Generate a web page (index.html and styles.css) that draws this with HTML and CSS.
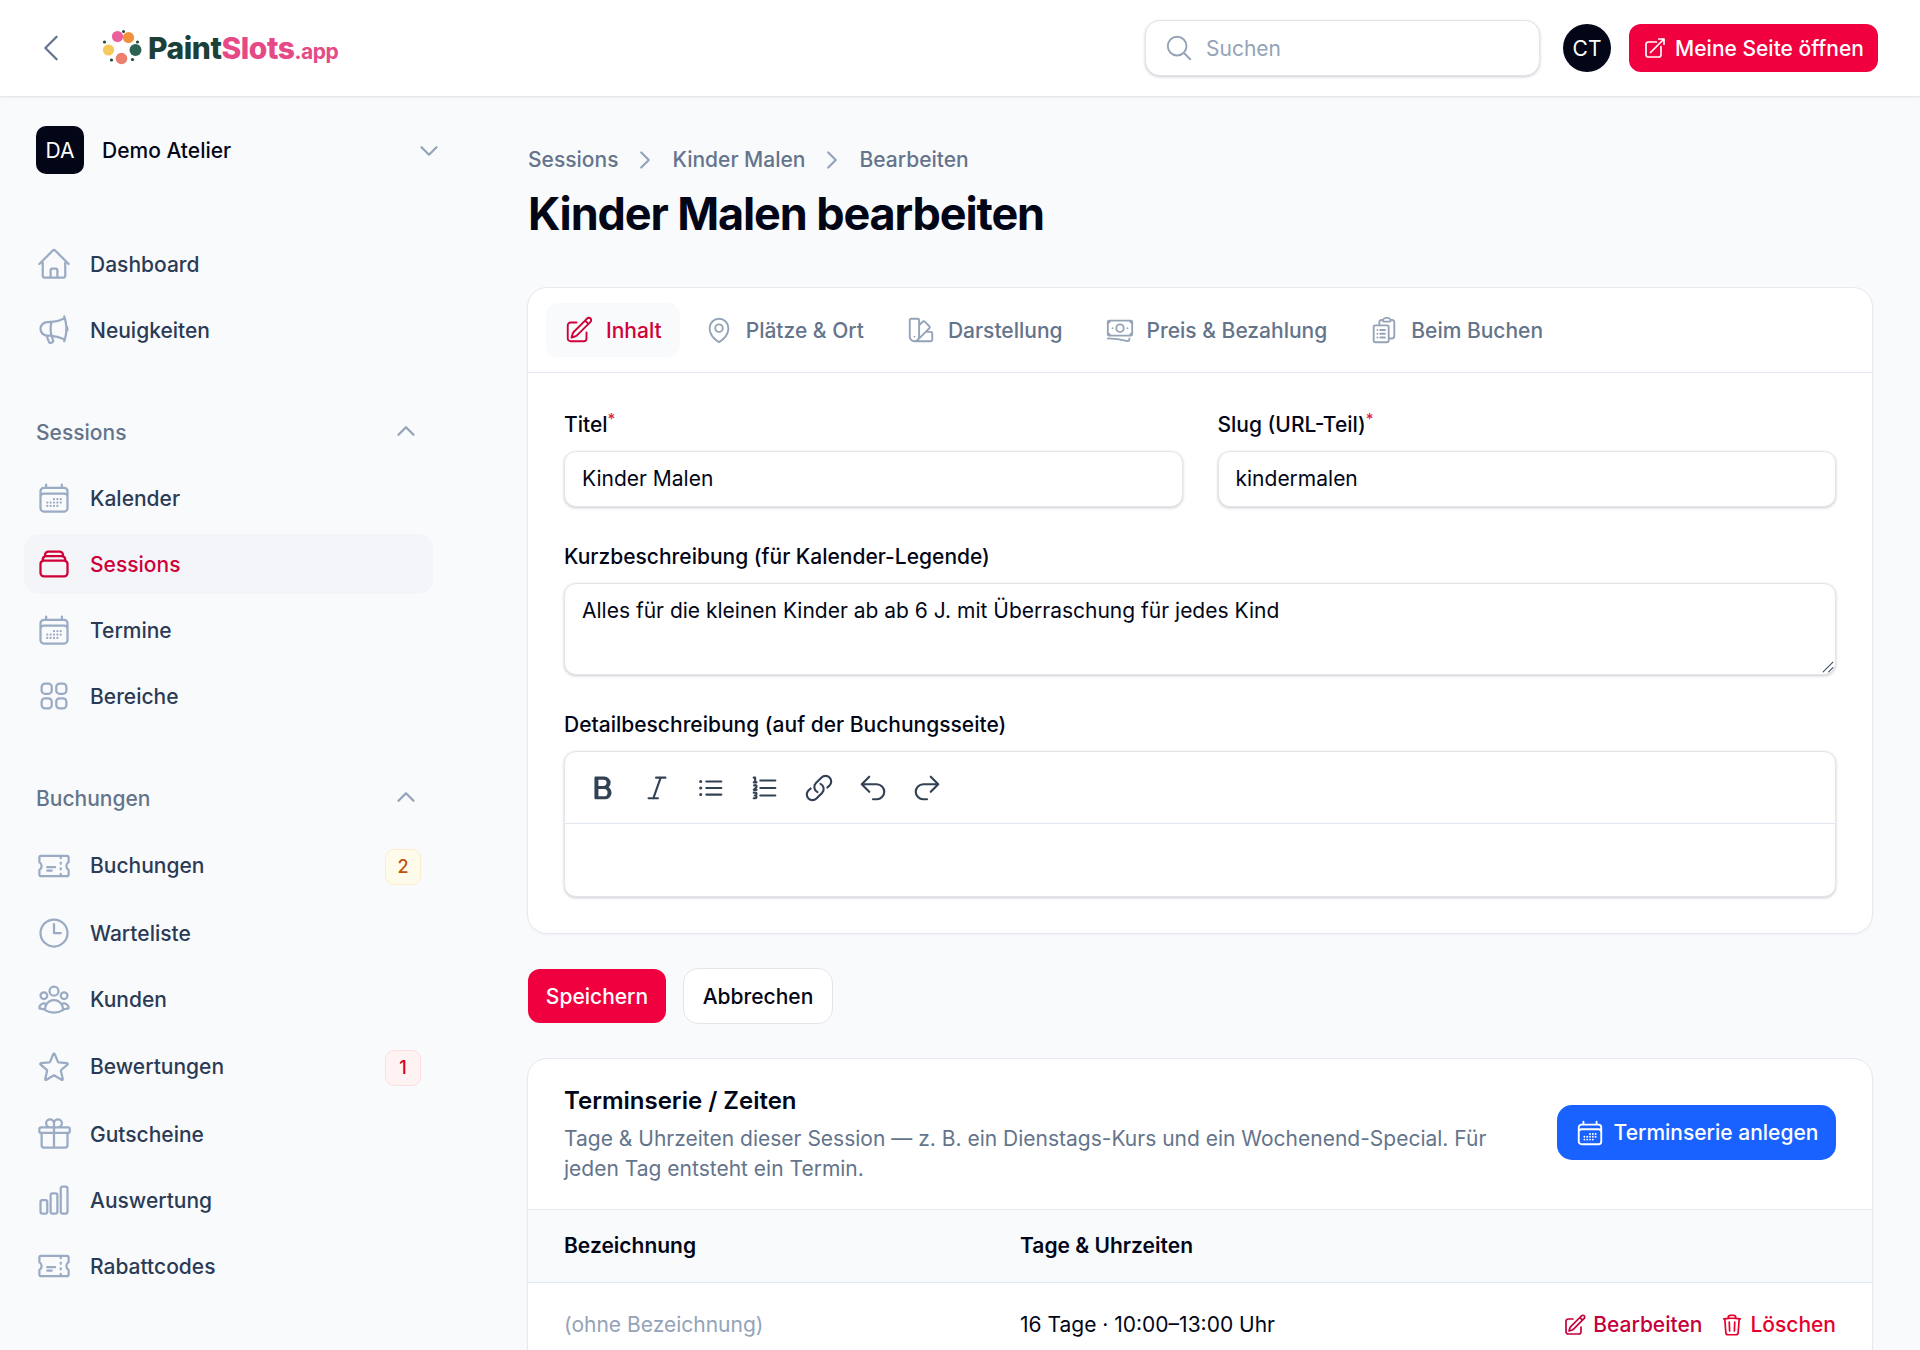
FILE: index.html
```html
<!DOCTYPE html>
<html lang="de">
<head>
<meta charset="utf-8">
<title>Kinder Malen bearbeiten</title>
<link rel="stylesheet" href="styles.css">
</head>
<body>
<svg class="sprite" xmlns="http://www.w3.org/2000/svg">
  <symbol id="i-home" viewBox="0 0 24 24"><path d="m2.25 12 8.954-8.955c.44-.439 1.152-.439 1.591 0L21.75 12M4.5 9.75v10.125c0 .621.504 1.125 1.125 1.125H9.75v-4.875c0-.621.504-1.125 1.125-1.125h2.25c.621 0 1.125.504 1.125 1.125V21h4.125c.621 0 1.125-.504 1.125-1.125V9.75M8.25 21h8.25"/></symbol>
  <symbol id="i-mega" viewBox="0 0 24 24"><path d="M10.34 15.84c-.688-.06-1.386-.09-2.09-.09H7.5a4.5 4.5 0 1 1 0-9h.75c.704 0 1.402-.03 2.09-.09m0 9.18c.253.962.584 1.892.985 2.783.247.55.06 1.21-.463 1.511l-.657.38c-.551.318-1.26.117-1.527-.461a20.845 20.845 0 0 1-1.44-4.282m3.102.069a18.03 18.03 0 0 1-.59-4.59c0-1.586.205-3.124.59-4.59m0 9.18a23.848 23.848 0 0 1 8.835 2.535M10.34 6.66a23.847 23.847 0 0 0 8.835-2.535m0 0A23.74 23.74 0 0 0 18.795 3m.38 1.125a23.91 23.91 0 0 1 1.014 5.395m-1.014 8.855c-.118.38-.245.754-.38 1.125m.38-1.125a23.91 23.91 0 0 0 1.014-5.395m0-3.46c.495.413.811 1.035.811 1.73 0 .695-.316 1.317-.811 1.73m0-3.46a24.347 24.347 0 0 1 0 3.46"/></symbol>
  <symbol id="i-cal" viewBox="0 0 24 24"><path d="M6.75 3v2.25M17.25 3v2.25M3 18.75V7.5a2.25 2.25 0 0 1 2.25-2.25h13.5A2.25 2.25 0 0 1 21 7.5v11.25m-18 0A2.25 2.25 0 0 0 5.25 21h13.5A2.25 2.25 0 0 0 21 18.75m-18 0v-7.5A2.25 2.25 0 0 1 5.25 9h13.5A2.25 2.25 0 0 1 21 11.25v7.5m-9-6h.008v.008H12v-.008ZM12 15h.008v.008H12V15Zm0 2.25h.008v.008H12v-.008ZM9.75 15h.008v.008H9.75V15Zm0 2.25h.008v.008H9.75v-.008ZM7.5 15h.008v.008H7.5V15Zm0 2.25h.008v.008H7.5v-.008Zm6.75-4.5h.008v.008h-.008v-.008Zm0 2.25h.008v.008h-.008V15Zm0 2.25h.008v.008h-.008v-.008Zm2.25-4.5h.008v.008H16.5v-.008Zm0 2.25h.008v.008H16.5V15Z"/></symbol>
  <symbol id="i-stack" viewBox="0 0 24 24"><path d="M6 6.878V6a2.25 2.25 0 0 1 2.25-2.25h7.5A2.25 2.25 0 0 1 18 6v.878m-12 0c.235-.083.487-.128.75-.128h10.5c.263 0 .515.045.75.128m-12 0A2.244 2.244 0 0 0 4.5 9v.878m13.5-3A2.244 2.244 0 0 1 19.5 9v.878m0 0a2.246 2.246 0 0 0-.75-.128H5.25c-.263 0-.515.045-.75.128m15 0A2.25 2.25 0 0 1 21 12v6a2.25 2.25 0 0 1-2.25 2.25H5.25A2.25 2.25 0 0 1 3 18v-6c0-.98.626-1.813 1.5-2.122"/></symbol>
  <symbol id="i-squares" viewBox="0 0 24 24"><path d="M3.75 6A2.25 2.25 0 0 1 6 3.75h2.25A2.25 2.25 0 0 1 10.5 6v2.25a2.25 2.25 0 0 1-2.25 2.25H6a2.25 2.25 0 0 1-2.25-2.25V6ZM3.75 15.75A2.25 2.25 0 0 1 6 13.5h2.25a2.25 2.25 0 0 1 2.25 2.25V18a2.25 2.25 0 0 1-2.25 2.25H6A2.25 2.25 0 0 1 3.75 18v-2.25ZM13.5 6a2.25 2.25 0 0 1 2.25-2.25H18A2.25 2.25 0 0 1 20.25 6v2.25A2.25 2.25 0 0 1 18 10.5h-2.25a2.25 2.25 0 0 1-2.25-2.25V6ZM13.5 15.75a2.25 2.25 0 0 1 2.25-2.25H18a2.25 2.25 0 0 1 2.25 2.25V18A2.25 2.25 0 0 1 18 20.25h-2.25A2.25 2.25 0 0 1 13.5 18v-2.25Z"/></symbol>
  <symbol id="i-ticket" viewBox="0 0 24 24"><path d="M16.5 6v.75m0 3v.75m0 3v.75m0 3V18m-9-5.25h5.25M7.5 15h3M3.375 5.25c-.621 0-1.125.504-1.125 1.125v3.026a2.999 2.999 0 0 1 0 5.198v3.026c0 .621.504 1.125 1.125 1.125h17.25c.621 0 1.125-.504 1.125-1.125v-3.026a2.999 2.999 0 0 1 0-5.198V6.375c0-.621-.504-1.125-1.125-1.125H3.375Z"/></symbol>
  <symbol id="i-clock" viewBox="0 0 24 24"><path d="M12 6v6h4.5m4.5 0a9 9 0 1 1-18 0 9 9 0 0 1 18 0Z"/></symbol>
  <symbol id="i-users" viewBox="0 0 24 24"><path d="M18 18.72a9.094 9.094 0 0 0 3.741-.479 3 3 0 0 0-4.682-2.72m.94 3.198.001.031c0 .225-.012.447-.037.666A11.944 11.944 0 0 1 12 21c-2.17 0-4.207-.576-5.963-1.584A6.062 6.062 0 0 1 6 18.719m12 0a5.971 5.971 0 0 0-.941-3.197m0 0A5.995 5.995 0 0 0 12 12.75a5.995 5.995 0 0 0-5.058 2.772m0 0a3 3 0 0 0-4.681 2.72 8.986 8.986 0 0 0 3.74.477m.94-3.197a5.971 5.971 0 0 0-.94 3.197M15 6.75a3 3 0 1 1-6 0 3 3 0 0 1 6 0Zm6 3a2.25 2.25 0 1 1-4.5 0 2.25 2.25 0 0 1 4.5 0Zm-13.5 0a2.25 2.25 0 1 1-4.5 0 2.25 2.25 0 0 1 4.5 0Z"/></symbol>
  <symbol id="i-star" viewBox="0 0 24 24"><path d="M11.48 3.499a.562.562 0 0 1 1.04 0l2.125 5.111a.563.563 0 0 0 .475.345l5.518.442c.499.04.701.663.321.988l-4.204 3.602a.563.563 0 0 0-.182.557l1.285 5.385a.562.562 0 0 1-.84.61l-4.725-2.885a.562.562 0 0 0-.586 0L6.982 20.54a.562.562 0 0 1-.84-.61l1.285-5.386a.562.562 0 0 0-.182-.557l-4.204-3.602a.562.562 0 0 1 .321-.988l5.518-.442a.563.563 0 0 0 .475-.345L11.48 3.5Z"/></symbol>
  <symbol id="i-gift" viewBox="0 0 24 24"><path d="M21 11.25v8.25a1.5 1.5 0 0 1-1.5 1.5H5.25a1.5 1.5 0 0 1-1.5-1.5v-8.25M12 4.875A2.625 2.625 0 1 0 9.375 7.5H12m0-2.625V7.5m0-2.625A2.625 2.625 0 1 1 14.625 7.5H12m0 0V21m-8.625-9.75h18c.621 0 1.125-.504 1.125-1.125v-1.5c0-.621-.504-1.125-1.125-1.125h-18c-.621 0-1.125.504-1.125 1.125v1.5c0 .621.504 1.125 1.125 1.125Z"/></symbol>
  <symbol id="i-chart" viewBox="0 0 24 24"><path d="M3 13.125C3 12.504 3.504 12 4.125 12h2.25c.621 0 1.125.504 1.125 1.125v6.75C7.5 20.496 6.996 21 6.375 21h-2.25A1.125 1.125 0 0 1 3 19.875v-6.75ZM9.75 8.625c0-.621.504-1.125 1.125-1.125h2.25c.621 0 1.125.504 1.125 1.125v11.25c0 .621-.504 1.125-1.125 1.125h-2.25a1.125 1.125 0 0 1-1.125-1.125V8.625ZM16.5 4.125c0-.621.504-1.125 1.125-1.125h2.25C20.496 3 21 3.504 21 4.125v15.75c0 .621-.504 1.125-1.125 1.125h-2.25a1.125 1.125 0 0 1-1.125-1.125V4.125Z"/></symbol>
  <symbol id="i-search" viewBox="0 0 24 24"><path d="m21 21-5.197-5.197m0 0A7.5 7.5 0 1 0 5.196 5.196a7.5 7.5 0 0 0 10.607 10.607Z"/></symbol>
  <symbol id="i-ext" viewBox="0 0 24 24"><path d="M13.5 6H5.25A2.25 2.25 0 0 0 3 8.25v10.5A2.25 2.25 0 0 0 5.25 21h10.5A2.25 2.25 0 0 0 18 18.75V10.5m-10.5 6L21 3m0 0h-5.25M21 3v5.25"/></symbol>
  <symbol id="i-pencil" viewBox="0 0 24 24"><path d="m16.862 4.487 1.687-1.688a1.875 1.875 0 1 1 2.652 2.652L10.582 16.07a4.5 4.5 0 0 1-1.897 1.13L6 18l.8-2.685a4.5 4.5 0 0 1 1.13-1.897l8.932-8.931Zm0 0L19.5 7.125M18 14v4.75A2.25 2.25 0 0 1 15.75 21H5.25A2.25 2.25 0 0 1 3 18.75V8.25A2.25 2.25 0 0 1 5.25 6H10"/></symbol>
  <symbol id="i-pin" viewBox="0 0 24 24"><path d="M15 10.5a3 3 0 1 1-6 0 3 3 0 0 1 6 0Z"/><path d="M19.5 10.5c0 7.142-7.5 11.25-7.5 11.25S4.5 17.642 4.5 10.5a7.5 7.5 0 1 1 15 0Z"/></symbol>
  <symbol id="i-swatch" viewBox="0 0 24 24"><path d="M4.098 19.902a3.75 3.75 0 0 0 5.304 0l6.401-6.402M6.75 21A3.75 3.75 0 0 1 3 17.25V4.125C3 3.504 3.504 3 4.125 3h5.25c.621 0 1.125.504 1.125 1.125v4.072M6.75 21a3.75 3.75 0 0 0 3.75-3.75V8.197M6.75 21h13.125c.621 0 1.125-.504 1.125-1.125v-5.25c0-.621-.504-1.125-1.125-1.125h-4.072M10.5 8.197l2.88-2.88c.438-.439 1.15-.439 1.59 0l3.712 3.713c.44.44.44 1.152 0 1.59l-2.879 2.88M6.75 17.25h.008v.008H6.75v-.008Z"/></symbol>
  <symbol id="i-bank" viewBox="0 0 24 24"><path d="M2.25 18.75a60.07 60.07 0 0 1 15.797 2.101c.727.198 1.453-.342 1.453-1.096V18.75M3.75 4.5v.75A.75.75 0 0 1 3 6h-.75m0 0v-.375c0-.621.504-1.125 1.125-1.125H20.25M2.25 6v9m18-10.5v.75c0 .414.336.75.75.75h.75m-1.5-1.5h.375c.621 0 1.125.504 1.125 1.125v9.75c0 .621-.504 1.125-1.125 1.125h-.375m1.5-1.5H21a.75.75 0 0 0-.75.75v.75m0 0H3.75m0 0h-.375a1.125 1.125 0 0 1-1.125-1.125V15m1.5 1.5v-.75A.75.75 0 0 0 3 15h-.75M15 10.5a3 3 0 1 1-6 0 3 3 0 0 1 6 0Zm3 0h.008v.008H18V10.5Zm-12 0h.008v.008H6V10.5Z"/></symbol>
  <symbol id="i-clip" viewBox="0 0 24 24"><path d="M9 12h3.75M9 15h3.75M9 18h3.75m3 .75H18a2.25 2.25 0 0 0 2.25-2.25V6.108c0-1.135-.845-2.098-1.976-2.192a48.424 48.424 0 0 0-1.123-.08m-5.801 0c-.065.21-.1.433-.1.664 0 .414.336.75.75.75h4.5a.75.75 0 0 0 .75-.75 2.25 2.25 0 0 0-.1-.664m-5.8 0A2.251 2.251 0 0 1 13.5 2.25H15c1.012 0 1.867.668 2.15 1.586m-5.8 0c-.376.023-.75.05-1.124.08C9.095 4.01 8.25 4.973 8.25 6.108V8.25m0 0H4.875c-.621 0-1.125.504-1.125 1.125v11.25c0 .621.504 1.125 1.125 1.125h9.75c.621 0 1.125-.504 1.125-1.125V9.375c0-.621-.504-1.125-1.125-1.125H8.25ZM6.75 12h.008v.008H6.75V12Zm0 3h.008v.008H6.75V15Zm0 3h.008v.008H6.75V18Z"/></symbol>
  <symbol id="i-trash" viewBox="0 0 24 24"><path d="m14.74 9-.346 9m-4.788 0L9.26 9m9.968-3.21c.342.052.682.107 1.022.166m-1.022-.165L18.16 19.673a2.25 2.25 0 0 1-2.244 2.077H8.084a2.25 2.25 0 0 1-2.244-2.077L4.772 5.79m14.456 0a48.108 48.108 0 0 0-3.478-.397m-12 .562c.34-.059.68-.114 1.022-.165m0 0a48.11 48.11 0 0 1 3.478-.397m7.5 0v-.916c0-1.18-.91-2.164-2.09-2.201a51.964 51.964 0 0 0-3.32 0c-1.18.037-2.09 1.022-2.09 2.201v.916m7.5 0a48.667 48.667 0 0 0-7.5 0"/></symbol>
  <symbol id="i-link" viewBox="0 0 24 24"><path d="M13.19 8.688a4.5 4.5 0 0 1 1.242 7.244l-4.5 4.5a4.5 4.5 0 0 1-6.364-6.364l1.757-1.757m13.35-.622 1.757-1.757a4.5 4.5 0 0 0-6.364-6.364l-4.5 4.5a4.5 4.5 0 0 0 1.242 7.244"/></symbol>
  <symbol id="i-undo" viewBox="0 0 24 24"><path d="M9 15 3 9m0 0 6-6M3 9h12a6 6 0 0 1 0 12h-3"/></symbol>
  <symbol id="i-redo" viewBox="0 0 24 24"><path d="m15 15 6-6m0 0-6-6m6 6H9a6 6 0 0 0 0 12h3"/></symbol>
  <symbol id="i-list" viewBox="0 0 24 24"><path d="M8.25 6.75h12M8.25 12h12m-12 5.25h12M3.75 6.75h.007v.008H3.75V6.75Zm.375 0a.375.375 0 1 1-.75 0 .375.375 0 0 1 .75 0ZM3.75 12h.007v.008H3.75V12Zm.375 0a.375.375 0 1 1-.75 0 .375.375 0 0 1 .75 0Zm-.375 5.25h.007v.008H3.75v-.008Zm.375 0a.375.375 0 1 1-.75 0 .375.375 0 0 1 .75 0Z"/></symbol>
  <symbol id="i-num" viewBox="0 0 24 24"><path d="M8.242 5.992h12m-12 6.003H20.24m-12 5.999h12M4.117 7.495v-3.75H2.99m1.125 3.75H2.99m1.125 0H5.24m-1.92 2.577a1.125 1.125 0 1 1 1.591 1.59l-1.83 1.83h2.16M2.99 15.745h1.125a1.125 1.125 0 0 1 0 2.25H3.74m0-.002h.375a1.125 1.125 0 0 1 0 2.25H2.99"/></symbol>
  <symbol id="i-bold" viewBox="0 0 24 24"><path d="M6.75 3.744h-.753v8.25h7.125a4.125 4.125 0 0 0 0-8.25H6.75Zm0 0v.38m0 16.122h6.747a4.5 4.5 0 0 0 0-9.001h-7.5v9h.753Zm0 0v-.37m0-15.751h6a3.75 3.75 0 1 1 0 7.5h-6m0-7.5v7.5m0 0v8.25m0-8.25h6.375a4.125 4.125 0 0 1 0 8.25H6.75m.747-15.38h4.875a3.375 3.375 0 0 1 0 6.75H7.497v-6.75Zm0 7.5h5.25a3.75 3.75 0 0 1 0 7.5h-5.25v-7.5Z"/></symbol>
  <symbol id="i-italic" viewBox="0 0 24 24"><path d="M5.248 20.246H9.05m0 0h3.696m-3.696 0 5.893-16.502m0 0h-3.697m3.697 0h3.803"/></symbol>
  <symbol id="i-left" viewBox="0 0 24 24"><path d="M15.75 19.5 8.25 12l7.5-7.5"/></symbol>
  <symbol id="i-right" viewBox="0 0 20 20"><path d="M7.5 5l5 5-5 5"/></symbol>
  <symbol id="i-down" viewBox="0 0 20 20"><path d="M5 7.5l5 5 5-5"/></symbol>
  <symbol id="i-up" viewBox="0 0 20 20"><path d="M5 12.5l5-5 5 5"/></symbol>
</svg>

<header class="topbar">
  <button class="back" type="button" aria-label="Zurück"><svg class="ic-back"><use href="#i-left"/></svg></button>
  <a class="logo" href="#">
    <svg class="logo-mark" viewBox="0 0 40 36" xmlns="http://www.w3.org/2000/svg">
      <circle cx="2.5" cy="12" r="1.6" fill="#1f4a3f"/>
      <circle cx="21.5" cy="1.5" r="1.5" fill="#1f4a3f"/>
      <circle cx="35.5" cy="12" r="1.6" fill="#1f4a3f"/>
      <circle cx="9.5" cy="30" r="1.6" fill="#1f4a3f"/>
      <circle cx="30.5" cy="29.5" r="1.6" fill="#1f4a3f"/>
      <circle cx="15.5" cy="6.5" r="5.6" fill="#ea5f9c"/>
      <circle cx="26.5" cy="7.5" r="5.6" fill="#f1913b"/>
      <circle cx="6.5" cy="20" r="5.6" fill="#f5c95c"/>
      <circle cx="33.5" cy="20" r="6" fill="#2c6355"/>
      <circle cx="19.5" cy="28.5" r="5.8" fill="#ec7f6e"/>
    </svg>
    <span class="logo-text"><span class="logo-dark">Paint</span><span class="logo-pink">Slots</span><span class="logo-app">.app</span></span>
  </a>
  <div class="topbar-right">
    <label class="search"><svg class="ic"><use href="#i-search"/></svg><span>Suchen</span></label>
    <span class="avatar">CT</span>
    <a class="btn btn-primary btn-open" href="#"><svg class="ic ic-s"><use href="#i-ext"/></svg>Meine Seite öffnen</a>
  </div>
</header>

<div class="shell">
  <aside class="sidebar">
    <div class="team">
      <span class="team-badge">DA</span>
      <span class="team-name">Demo Atelier</span>
      <svg class="chev chev-team"><use href="#i-down"/></svg>
    </div>

    <nav class="nav-group nav-first">
      <a class="nav-item"><svg class="ic"><use href="#i-home"/></svg>Dashboard</a>
      <a class="nav-item"><svg class="ic"><use href="#i-mega"/></svg>Neuigkeiten</a>
    </nav>

    <div class="nav-head">Sessions<svg class="chev"><use href="#i-up"/></svg></div>
    <nav class="nav-group">
      <a class="nav-item"><svg class="ic"><use href="#i-cal"/></svg>Kalender</a>
      <a class="nav-item active"><svg class="ic"><use href="#i-stack"/></svg>Sessions</a>
      <a class="nav-item"><svg class="ic"><use href="#i-cal"/></svg>Termine</a>
      <a class="nav-item"><svg class="ic"><use href="#i-squares"/></svg>Bereiche</a>
    </nav>

    <div class="nav-head">Buchungen<svg class="chev"><use href="#i-up"/></svg></div>
    <nav class="nav-group">
      <a class="nav-item has-badge"><svg class="ic"><use href="#i-ticket"/></svg>Buchungen<span class="badge badge-amber">2</span></a>
      <a class="nav-item"><svg class="ic"><use href="#i-clock"/></svg>Warteliste</a>
      <a class="nav-item"><svg class="ic"><use href="#i-users"/></svg>Kunden</a>
      <a class="nav-item has-badge"><svg class="ic"><use href="#i-star"/></svg>Bewertungen<span class="badge badge-red">1</span></a>
      <a class="nav-item"><svg class="ic"><use href="#i-gift"/></svg>Gutscheine</a>
      <a class="nav-item"><svg class="ic"><use href="#i-chart"/></svg>Auswertung</a>
      <a class="nav-item"><svg class="ic"><use href="#i-ticket"/></svg>Rabattcodes</a>
    </nav>
  </aside>

  <main class="main">
    <div class="crumbs">
      <span>Sessions</span><svg class="crumb-sep"><use href="#i-right"/></svg>
      <span>Kinder Malen</span><svg class="crumb-sep"><use href="#i-right"/></svg>
      <span>Bearbeiten</span>
    </div>
    <h1 class="title">Kinder Malen bearbeiten</h1>

    <section class="card">
      <div class="tabs">
        <a class="tab active"><svg class="ic ic-t"><use href="#i-pencil"/></svg>Inhalt</a>
        <a class="tab"><svg class="ic ic-t"><use href="#i-pin"/></svg>Plätze &amp; Ort</a>
        <a class="tab"><svg class="ic ic-t"><use href="#i-swatch"/></svg>Darstellung</a>
        <a class="tab"><svg class="ic ic-t"><use href="#i-bank"/></svg>Preis &amp; Bezahlung</a>
        <a class="tab"><svg class="ic ic-t"><use href="#i-clip"/></svg>Beim Buchen</a>
      </div>
      <div class="form">
        <div class="form-row">
          <div class="field">
            <div class="label">Titel<sup>*</sup></div>
            <div class="input">Kinder Malen</div>
          </div>
          <div class="field">
            <div class="label">Slug (URL-Teil)<sup>*</sup></div>
            <div class="input">kindermalen</div>
          </div>
        </div>
        <div class="field">
          <div class="label">Kurzbeschreibung (für Kalender-Legende)</div>
          <div class="input textarea">Alles für die kleinen Kinder ab ab 6 J. mit Überraschung für jedes Kind
            <svg class="grip" viewBox="0 0 12 12"><path d="M11 2 2 11M11 7l-4 4"/></svg>
          </div>
        </div>
        <div class="field">
          <div class="label">Detailbeschreibung (auf der Buchungsseite)</div>
          <div class="editor">
            <div class="toolbar">
              <svg class="tool"><use href="#i-bold"/></svg>
              <svg class="tool"><use href="#i-italic"/></svg>
              <svg class="tool"><use href="#i-list"/></svg>
              <svg class="tool"><use href="#i-num"/></svg>
              <svg class="tool"><use href="#i-link"/></svg>
              <svg class="tool"><use href="#i-undo"/></svg>
              <svg class="tool"><use href="#i-redo"/></svg>
            </div>
            <div class="editor-body"></div>
          </div>
        </div>
      </div>
    </section>

    <div class="actions">
      <a class="btn btn-primary btn-save">Speichern</a>
      <a class="btn btn-ghost">Abbrechen</a>
    </div>

    <section class="card card-series">
      <div class="series-head">
        <div class="series-text">
          <h2>Terminserie / Zeiten</h2>
          <p>Tage &amp; Uhrzeiten dieser Session — z. B. ein Dienstags-Kurs und ein Wochenend-Special. Für jeden Tag entsteht ein Termin.</p>
        </div>
        <a class="btn btn-blue"><svg class="ic"><use href="#i-cal"/></svg>Terminserie anlegen</a>
      </div>
      <div class="t-row t-head">
        <span class="col-a">Bezeichnung</span>
        <span class="col-b">Tage &amp; Uhrzeiten</span>
      </div>
      <div class="t-row t-body">
        <span class="col-a muted">(ohne Bezeichnung)</span>
        <span class="col-b">16 Tage · 10:00–13:00 Uhr</span>
        <span class="col-c">
          <a class="link link-edit"><svg class="ic ic-l"><use href="#i-pencil"/></svg>Bearbeiten</a>
          <a class="link link-del"><svg class="ic ic-l"><use href="#i-trash"/></svg>Löschen</a>
        </span>
      </div>
    </section>
  </main>
</div>
</body>
</html>
```

FILE: styles.css
```css
* { box-sizing: border-box; }
html, body { margin: 0; height: 100vh; overflow: hidden; }
body {
  font-family: Inter, "Liberation Sans", sans-serif;
  font-size: 21px;
  line-height: 30px;
  color: #020617;
  background: #f9fafc;
}
a { color: inherit; text-decoration: none; }
.sprite { display: none; }

.ic, .chev, .crumb-sep, .tool, .ic-back, .grip {
  fill: none;
  stroke: currentColor;
  stroke-linecap: round;
  stroke-linejoin: round;
}
.ic { width: 36px; height: 36px; stroke-width: 1.5; flex: none; }

/* top bar */
.topbar {
  height: 97px;
  background: #fff;
  border-bottom: 1px solid #e5e7eb;
  box-shadow: 0 1px 2px rgba(15, 23, 42, .05);
  display: flex;
  align-items: center;
  padding: 0 42px 0 33px;
  position: relative;
}
.back { width: 36px; height: 36px; padding: 0; border: 0; background: none; color: #64748b; margin-right: 33px; }
.ic-back { width: 36px; height: 36px; stroke-width: 1.5; display: block; }
.logo { display: flex; align-items: center; }
.logo-mark { width: 40px; height: 36px; flex: none; margin-right: 6px; }
.logo-text { font-weight: 800; font-size: 30px; letter-spacing: -.45px; line-height: 36px; white-space: nowrap; position: relative; top: 2px; }
.logo-dark { color: #1b4038; }
.logo-pink { color: #e54a87; }
.logo-app { color: #e54a87; font-size: 21px; font-weight: 700; }
.topbar-right { margin-left: auto; display: flex; align-items: center; }
.search {
  width: 395px; height: 56px; background: #fff; border-radius: 15px;
  border: 1px solid #e2e5ea; box-shadow: 0 1px 3px rgba(15, 23, 42, .22);
  display: flex; align-items: center; gap: 12px; padding: 0 18px; color: #94a3b8;
  margin-right: 23px;
}
.search span { padding-top: 2px; }
.search .ic { width: 30px; height: 30px; stroke-width: 1.5; }
.avatar {
  width: 48px; height: 48px; border-radius: 50%; background: #020617; color: #fff; padding-top: 2px;
  display: flex; align-items: center; justify-content: center; font-size: 21px; margin-right: 18px;
}
.btn {
  display: inline-flex; align-items: center; justify-content: center; font-weight: 500;
  border-radius: 12px; white-space: nowrap;
}
.btn-primary { background: #f0003f; color: #fff; }
.btn-open { height: 48px; width: 249px; gap: 8px; padding-top: 2px; }
.btn-open .ic-s { width: 24px; height: 24px; stroke-width: 1.7; margin-top: -2px; }

/* layout */
.shell { display: flex; align-items: flex-start; }
.sidebar { width: 480px; flex: none; padding: 29px 47px 0 24px; }
.main { flex: 1; min-width: 0; padding: 48px 47px 0 48px; }

/* sidebar */
.team { display: flex; align-items: center; padding: 0 0 0 12px; height: 48px; margin-right: -4px; }
.team-badge {
  width: 48px; height: 48px; border-radius: 10px; background: #020617; color: #fff; padding-top: 2px;
  display: flex; align-items: center; justify-content: center; font-size: 21px; margin-right: 18px;
}
.team-name { font-weight: 500; color: #020617; padding-top: 2px; }
.chev { width: 30px; height: 30px; color: #94a3b8; stroke-width: 1.5; margin-left: auto; margin-top: -4px; flex: none; }
.chev-team { margin-right: -7px; margin-top: 2px; }
.nav-first { margin-top: 60px; }
.nav-group { display: flex; flex-direction: column; gap: 6px; }
.nav-item {
  height: 60px; display: flex; align-items: center; gap: 18px; padding: 2px 12px 0;
  color: #2b3a55; font-weight: 500; border-radius: 15px;
}
.nav-item .ic { color: #9aabc4; margin-top: -2px; }
.nav-item.has-badge { height: 63px; padding-top: 0; }
.nav-item.has-badge .ic { margin-top: 0; }
.nav-item.active { background: #f3f5f9; color: #cf0038; }
.nav-item.active .ic { color: #cf0038; }
.badge {
  margin-left: auto; margin-top: 3px; width: 36px; height: 36px; border-radius: 9px;
  display: flex; align-items: center; justify-content: center; font-size: 18px; line-height: 1; border: 1px solid;
}
.badge-amber { background: #fffbeb; color: #c2510c; border-color: #fdeecb; }
.badge-red { background: #fef2f2; color: #d00020; border-color: #fddde0; }
.nav-head {
  display: flex; align-items: center; height: 30px; margin: 58px 0 20px; padding: 0 12px;
  color: #64748b; font-weight: 500;
}

/* main */
.crumbs { display: flex; align-items: center; gap: 12px; color: #64748b; font-weight: 500; height: 30px; }
.crumb-sep { width: 30px; height: 30px; color: #94a3b8; stroke-width: 1.5; flex: none; }
.title { margin: 11px 0 45px; font-size: 45px; line-height: 56px; font-weight: 700; letter-spacing: -1.12px; color: #020617; }
.card {
  background: #fff; border: 1px solid #e6e9ef; border-radius: 20px; margin-left: -1px;
  box-shadow: 0 1px 2px rgba(15, 23, 42, .04);
}
.tabs { display: flex; gap: 6px; padding: 15px 18px; height: 85px; border-bottom: 1px solid #e2e8f0; }
.tab {
  display: flex; align-items: center; gap: 12px; padding: 2px 18px 0; height: 54px; border-radius: 12px;
  color: #64748b; font-weight: 500; white-space: nowrap;
}
.tab .ic { color: #94a3b8; margin-top: -2px; }
.ic-t { width: 30px; height: 30px; }
.tab.active { background: #f8fafc; color: #cf0038; }
.tab.active .ic { color: #cf0038; }
.form { padding: 36px; display: flex; flex-direction: column; gap: 34px; }
.form-row { display: grid; grid-template-columns: 1fr 1fr; gap: 35px; }
.label { font-weight: 500; padding-top: 1px; margin-bottom: 11px; color: #020617; height: 31px; }
.label sup { color: #e11d48; font-size: 15px; line-height: 0; font-weight: 500; }
.input {
  height: 56px; background: #fff; border-radius: 12px; border: 1px solid #e2e5ea;
  box-shadow: 0 1px 3px rgba(15, 23, 42, .22); padding: 12px 17px; color: #020617; position: relative;
}
.textarea { height: 92px; }
.grip { position: absolute; right: 1px; bottom: 1px; width: 13px; height: 13px; color: #475569; stroke-width: 1.1; }
.editor {
  height: 146px; border-radius: 12px; border: 1px solid #e2e5ea;
  box-shadow: 0 1px 3px rgba(15, 23, 42, .22); background: #fff;
}
.toolbar { height: 72px; border-bottom: 1px solid #e2e8f0; display: flex; align-items: center; gap: 24px; padding: 0 23px; color: #334155; }
.tool { width: 30px; height: 30px; stroke-width: 1.7; }

.actions { display: flex; align-items: center; gap: 17px; margin: 34px 0; }
.btn-save { width: 138px; height: 54px; padding-top: 2px; }
.btn-ghost { width: 150px; height: 56px; background: #fff; border: 1px solid #e2e5ea; border-radius: 15px; color: #020617; padding-top: 2px; }

.series-head { display: flex; align-items: flex-start; justify-content: space-between; padding: 24px 36px 0; height: 150px; }
.series-text { width: 950px; }
.series-text h2 { margin: 0 0 5px; font-size: 24px; line-height: 36px; font-weight: 600; color: #020617; }
.series-text p { margin: 0; color: #64748b; }
.btn-blue { background: #1a62ff; color: #fff; height: 55px; width: 279px; border-radius: 15px; gap: 9px; flex: none; margin-top: 22px; }
.btn-blue .ic { width: 30px; height: 30px; }
.t-row { display: flex; align-items: center; padding: 0 36px; }
.t-head { height: 74px; background: #f8fafc; border-top: 1px solid #e2e8f0; border-bottom: 1px solid #e2e8f0; font-weight: 600; }
.t-body { height: 84px; font-weight: 400; }
.col-a { width: 456px; }
.col-c { margin-left: auto; display: flex; gap: 18px; }
.muted { color: #94a3b8; }
.link { display: inline-flex; align-items: center; gap: 6px; font-weight: 500; }
.ic-l { width: 24px; height: 24px; stroke-width: 1.7; }
.link-edit { color: #c4003a; }
.link-del { color: #e6002d; }
```
